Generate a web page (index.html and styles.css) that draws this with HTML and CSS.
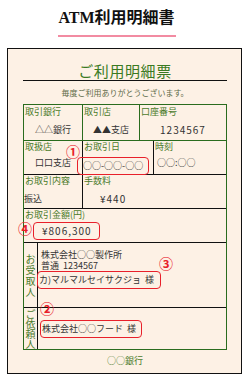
FILE: index.html
```html
<!DOCTYPE html>
<html lang="ja">

<head>
    <meta charset="UTF-8">
    <meta name="viewport" content="width=device-width, initial-scale=1.0">
    <title>ATM利用明細書</title>
    <link rel="stylesheet" href="styles.css">
</head>

<body>

    <h1 class="page-title">ATM利用明細書</h1>
    <div class="title-rule"></div>

    <div class="receipt">
        <h2 class="receipt-head">ご利用明細票</h2>
        <p class="greeting">毎度ご利用ありがとうございます。</p>

        <div class="slip">
            <div class="row row-account">
                <div class="cell w-bank">
                    <div class="label">取引銀行</div>
                    <div class="value center">△△銀行</div>
                </div>
                <div class="cell w-branch">
                    <div class="label">取引店</div>
                    <div class="value center">▲▲支店</div>
                </div>
                <div class="cell grow">
                    <div class="label">口座番号</div>
                    <div class="value center num">1234567</div>
                </div>
            </div>

            <div class="row row-date">
                <div class="cell w-bank">
                    <div class="label">取扱店</div>
                    <div class="value center">口口支店</div>
                </div>
                <div class="cell w-date">
                    <div class="label">お取引日</div>
                    <div class="value"><span class="mark mark-date">○○-○○-○○</span></div>
                </div>
                <div class="cell grow">
                    <div class="label">時刻</div>
                    <div class="value pad">○○:○○</div>
                </div>
            </div>

            <div class="row row-kind">
                <div class="cell w-bank">
                    <div class="label">お取引内容</div>
                    <div class="value">振込</div>
                </div>
                <div class="cell grow">
                    <div class="label">手数料</div>
                    <div class="value fee num">¥440</div>
                </div>
            </div>

            <div class="row row-amount">
                <div class="cell grow">
                    <div class="label">お取引金額(円)</div>
                    <div class="value"><span class="mark mark-amount num">¥806,300</span></div>
                </div>
            </div>

            <div class="row row-payee">
                <div class="side">お受取人</div>
                <div class="party">
                    <div class="party-line">株式会社○○製作所</div>
                    <div class="party-line">普通&nbsp;&nbsp;1234567</div>
                    <span class="mark mark-payee">カ)マルマルセイサクジョ&nbsp;&nbsp;様</span>
                </div>
            </div>

            <div class="row row-sender">
                <div class="side tight">ご依頼人</div>
                <div class="party middle">
                    <span class="mark mark-sender">株式会社○○フード&nbsp;&nbsp;様</span>
                </div>
            </div>

            <!-- 注記番号 -->
            <span class="note note-1">①</span>
            <span class="note note-2">②</span>
            <span class="note note-3">③</span>
            <span class="note note-4">④</span>
        </div>

        <p class="bank-foot">○○銀行</p>
    </div>

</body>

</html>
```

FILE: styles.css
```css
body {
    margin: 0;
    background-color: #fff;
    color: #333;
    font-family: "Noto Sans CJK JP", sans-serif;
}

.page-title {
    margin: 8px 0 0;
    padding-right: 10px;
    font-family: "Liberation Serif", "Noto Sans CJK JP", serif;
    font-size: 16px;
    font-weight: bold;
    line-height: 20px;
    text-align: center;
    color: #111;
}

.title-rule {
    width: 118px;
    height: 2px;
    margin: 7px 0 0 58px;
    background-color: #f28ba2;
}

.receipt {
    width: 235px;
    margin: 11px 0 0 7px;
    padding: 13px 14px 6px 15px;
    box-sizing: border-box;
    border: 1px solid #111;
    background-color: #fdf1e5;
}

.receipt-head {
    margin: 0;
    font-size: 15px;
    font-weight: normal;
    line-height: 18px;
    letter-spacing: 0.6px;
    text-align: center;
    color: #3a7a22;
    border-bottom: 1px solid #111;
}

.greeting {
    margin: 6px 0 5px;
    font-size: 8px;
    line-height: 12px;
    text-align: center;
    color: #5e6b48;
}

/* 明細の枠 */
.slip {
    position: relative;
    border: 1px solid #2a6c1e;
}

.row {
    display: flex;
    border-top: 1px solid #111;
}

.row-account {
    height: 35px;
    border-top: none;
}

.row-date {
    height: 33px;
    border-top-color: #2a6c1e;
}

.row-kind,
.row-amount {
    height: 33px;
}

.row-payee {
    height: 64px;
}

.row-sender {
    height: 41px;
}

.cell {
    border-right: 1px solid #111;
}

.row-account .cell {
    border-right-color: #2a6c1e;
    padding-top: 1px;
}

.cell:last-child {
    border-right: none;
}

.w-bank {
    width: 58px;
}

.w-branch {
    width: 56px;
}

.w-date {
    width: 70px;
}

.grow {
    flex: 1;
}

.label {
    padding-left: 1px;
    font-size: 9px;
    line-height: 12px;
    color: #4b7b2b;
    white-space: nowrap;
}

.value {
    margin-top: 4px;
    font-size: 9px;
    line-height: 12px;
    color: #333;
    white-space: nowrap;
}

.row-account .value,
.row-kind .value {
    margin-top: 6px;
}

.row-amount .value {
    margin-top: 1px;
}

.center {
    text-align: center;
}

.pad {
    padding-left: 3px;
}

.num {
    font-size: 10px;
    letter-spacing: 1px;
}

.fee {
    padding-left: 17px;
}

.mark {
    display: inline-block;
    border: 1px solid #e8202a;
    border-radius: 4px;
    line-height: 12px;
}

.mark-date {
    margin-left: -6px;
    padding: 2px 5px;
}

.mark-amount {
    margin-left: 9px;
    padding: 2px 7px 2px 8px;
}

/* 受取人・依頼人 */
.side {
    width: 14px;
    padding: 0 2px;
    box-sizing: border-box;
    border-right: 1px solid #111;
    display: flex;
    align-items: center;
    justify-content: center;
    font-size: 10px;
    line-height: 11px;
    text-align: center;
    color: #4b7b2b;
    word-break: break-all;
}

.side.tight {
    line-height: 10px;
}

.party {
    flex: 1;
    padding: 6px 0 0 3px;
    font-size: 9px;
    line-height: 11px;
    color: #333;
    white-space: nowrap;
}

.party.middle {
    display: flex;
    align-items: center;
    padding: 0 0 0 2px;
}

.mark-payee {
    margin-left: -4px;
    padding: 2px 6px 2px 1px;
}

.mark-sender {
    padding: 2px 5px 2px 1px;
}

.note {
    position: absolute;
    width: 14px;
    font-size: 14px;
    font-weight: bold;
    line-height: 14px;
    text-align: center;
    color: #e8202a;
}

.note-1 {
    left: 42px;
    top: 39px;
}

.note-2 {
    left: 16px;
    top: 196px;
}

.note-3 {
    left: 135px;
    top: 151px;
}

.note-4 {
    left: -6px;
    top: 116px;
}

.bank-foot {
    margin: 5px 0 0;
    font-size: 9px;
    line-height: 12px;
    text-align: center;
    color: #4b7b2b;
}
```
